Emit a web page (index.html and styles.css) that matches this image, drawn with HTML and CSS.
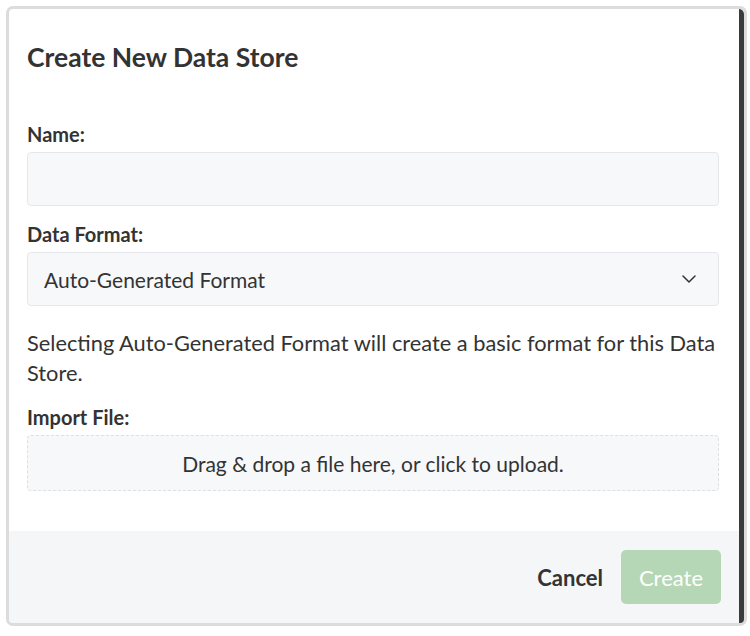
FILE: index.html
```html
<!DOCTYPE html>
<html lang="en">
<head>
  <meta charset="UTF-8">
  <meta name="viewport" content="width=device-width, initial-scale=1.0">
  <title>Create New Data Store</title>
  <link rel="stylesheet" href="styles.css">
</head>
<body>
<div class="modal">
  <div class="modal-inner">
    <div class="modal-body">
      <h1>Create New Data Store</h1>

      <label class="field-label" for="storeName">Name:</label>
      <input type="text" id="storeName" class="field">

      <label class="field-label" for="dataFormat">Data Format:</label>
      <div class="select-wrap">
        <select id="dataFormat" class="field select">
          <option>Auto-Generated Format</option>
        </select>
        <svg class="chevron" width="14" height="8" viewBox="0 0 14 8" fill="none">
          <path d="M1 1l6 6 6-6" stroke="#333" stroke-width="1.5" stroke-linecap="round" stroke-linejoin="round"/>
        </svg>
      </div>

      <p class="hint">Selecting Auto-Generated Format will create a basic format for this Data Store.</p>

      <label class="field-label">Import File:</label>
      <div class="dropzone">Drag &amp; drop a file here, or click to upload.</div>
    </div>

    <div class="modal-footer">
      <button class="btn-cancel">Cancel</button>
      <button class="btn-create" disabled>Create</button>
    </div>
  </div>
</div>
</body>
</html>
```

FILE: styles.css
```css
* {
  box-sizing: border-box;
}

body {
  margin: 0;
  padding: 6px 3px 0 6px;
  background-color: white;
  font-family: Lato, 'Open Sans', sans-serif;
  color: #333;
}

.modal {
  height: 620px;
  border: 3px solid #dcdcdc;
  border-radius: 7px;
  overflow: hidden;
}

.modal-inner {
  height: 100%;
  display: flex;
  flex-direction: column;
  border-right: 5px solid #3b3b3b;
  border-top-right-radius: 5px;
}

.modal-body {
  flex: 1;
  padding: 34px 20px 0 18px;
  display: flex;
  flex-direction: column;
}

h1 {
  margin: 0 0 51px;
  font-size: 26.5px;
  font-weight: 700;
  line-height: 28px;
  color: #333;
}

.field-label {
  display: block;
  margin-bottom: 6px;
  font-size: 20px;
  font-weight: 700;
  line-height: 24px;
}

.field {
  width: 100%;
  height: 54px;
  margin: 0 0 16px;
  padding: 0 16px;
  border: 1px solid #e5e7ea;
  border-radius: 4px;
  background-color: #f7f8fa;
  font-family: inherit;
  font-size: 21px;
  color: #333;
}

.select-wrap {
  position: relative;
}

.select {
  appearance: none;
  -webkit-appearance: none;
  margin-bottom: 0;
}

.chevron {
  position: absolute;
  right: 23px;
  top: 23px;
}

.hint {
  margin: 22px 0 17px;
  font-size: 21.8px;
  line-height: 30px;
}

.dropzone {
  height: 56px;
  display: flex;
  align-items: center;
  justify-content: center;
  border: 1px dashed #dedfe2;
  border-radius: 4px;
  background-color: #f7f8fa;
  font-size: 21px;
}

.modal-footer {
  height: 92px;
  display: flex;
  align-items: center;
  justify-content: flex-end;
  gap: 18px;
  padding: 0 18px;
  background-color: #f5f6f8;
}

.btn-cancel {
  padding: 0;
  border: none;
  background: none;
  font-family: inherit;
  font-size: 22px;
  font-weight: 700;
  color: #333;
  cursor: pointer;
}

.btn-create {
  width: 100px;
  height: 54px;
  border: none;
  border-radius: 5px;
  background-color: #b6d7b6;
  font-family: inherit;
  font-size: 22px;
  color: white;
}
```
